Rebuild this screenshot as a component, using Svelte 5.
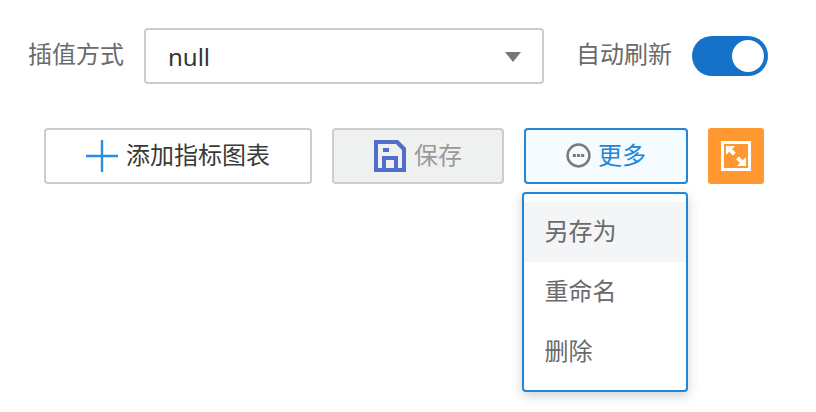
<script>
	const menuItems = ['另存为', '重命名', '删除'];
	let autoRefresh = $state(true);
</script>

<div class="page">
	<div class="filters">
		<span class="label">插值方式</span>
		<div class="select">
			<span>null</span>
			<i class="caret"></i>
		</div>
		<span class="label refresh">自动刷新</span>
		<button class="toggle" class:on={autoRefresh} aria-label="自动刷新" onclick={() => (autoRefresh = !autoRefresh)}>
			<i></i>
		</button>
	</div>

	<div class="actions">
		<button class="btn add">
			<svg width="32" height="32" viewBox="0 0 32 32">
				<path d="M0 16H32M16 0V32" stroke="#2b8ce0" stroke-width="2.4" fill="none" />
			</svg>
			<span>添加指标图表</span>
		</button>
		<button class="btn save" disabled>
			<svg width="32" height="32" viewBox="0 0 32 32">
				<path
					fill="#4f6fcb"
					fill-rule="evenodd"
					d="M0 0H24L32 8V32H0ZM4 4V28H8V16H24V28H28V10L22 4ZM12 20V28H20V20ZM9 8H15V12H9Z"
				/>
			</svg>
			<span>保存</span>
		</button>
		<div class="more-wrap">
			<button class="btn more">
				<svg class="dots" width="25" height="25" viewBox="0 0 24 24">
					<circle cx="12" cy="12" r="10.5" fill="none" stroke="#7a7a7a" stroke-width="2.4" />
					<path d="M6.5 10.500h3v3h-3zM10.500 10.500h3v3h-3zM14.500 10.500h3v3h-3z" fill="#7a7a7a" />
				</svg>
				<span>更多</span>
			</button>
			<ul class="menu">
				{#each menuItems as item, i}
					<li class:active={i === 0}>{item}</li>
				{/each}
			</ul>
		</div>
		<button class="expand" aria-label="全屏">
			<svg width="32" height="32" viewBox="0 0 32 32">
				<rect x="2.500" y="2.500" width="27" height="27" fill="none" stroke="#fff" stroke-width="3" />
				<path d="M6 6h9l-3 3 3.800 3.800-2.800 2.800L9.200 11.800 6 15zM26 26h-9l3-3-3.800-3.800 2.800-2.800 3.800 3.800L26 17z" fill="#fff" />
			</svg>
		</button>
	</div>
</div>

<style>
	:global(body) {
		background: #fff;
	}

	.page {
		width: 816px;
		height: 412px;
		box-sizing: border-box;
		padding: 28px 28px 0;
		font-family: 'Noto Sans', 'Noto Sans CJK SC', sans-serif;
		overflow: hidden;
	}

	.filters {
		display: flex;
		align-items: center;
		height: 56px;
	}

	.label {
		font-size: 24px;
		color: #6a6a6a;
		margin-bottom: 8px;
	}

	.select {
		width: 400px;
		height: 56px;
		box-sizing: border-box;
		margin-left: 20px;
		padding: 0 22px;
		border: 2px solid #ccc;
		border-radius: 4px;
		display: flex;
		align-items: center;
		justify-content: space-between;
		font-size: 24px;
		color: #333;
	}

	.caret {
		width: 0;
		height: 0;
		border-left: 8px solid transparent;
		border-right: 8px solid transparent;
		border-top: 10px solid #777;
		margin-top: 2px;
		margin-right: -1px;
	}

	.refresh {
		margin-left: 32px;
	}

	.toggle {
		width: 76px;
		height: 40px;
		margin-left: 20px;
		padding: 4px;
		border: none;
		border-radius: 20px;
		background: #ccc;
		display: flex;
		cursor: pointer;
	}

	.toggle.on {
		background: #1572c8;
		justify-content: flex-end;
	}

	.toggle i {
		width: 32px;
		height: 32px;
		border-radius: 50%;
		background: #fff;
	}

	.actions {
		display: flex;
		align-items: flex-start;
		gap: 20px;
		margin-top: 44px;
		padding-left: 16px;
	}

	.btn {
		height: 56px;
		box-sizing: border-box;
		border: 2px solid #ccc;
		border-radius: 4px;
		background: #fff;
		font-family: inherit;
		font-size: 24px;
		color: #3a3a3a;
		display: flex;
		align-items: center;
		justify-content: center;
		cursor: pointer;
		padding: 0;
	}

	.btn span {
		margin-bottom: 6px;
	}

	.add {
		width: 268px;
		gap: 8px;
	}

	.save {
		width: 172px;
		gap: 8px;
		background: #eff1f1;
		color: #999;
		cursor: default;
	}

	.more-wrap {
		position: relative;
	}

	.more {
		width: 164px;
		gap: 7px;
		border-color: #2185d8;
		background: #f6fbff;
		color: #2185d8;
	}

	.dots {
		margin-bottom: 2px;
	}

	.menu {
		position: absolute;
		top: 64px;
		left: -2px;
		width: 166px;
		height: 200px;
		box-sizing: border-box;
		margin: 0;
		padding: 8px 0;
		list-style: none;
		background: #fff;
		border: 2px solid #2185d8;
		border-radius: 4px;
		box-shadow: 0 4px 12px rgba(0, 0, 0, 0.18);
		font-size: 24px;
		color: #6a6a6a;
	}

	.menu li {
		height: 60px;
		line-height: 58px;
		padding-left: 20.5px;
	}

	.menu li.active {
		background: #f4f5f7;
	}

	.expand {
		width: 56px;
		height: 56px;
		padding: 0;
		border: none;
		border-radius: 3px;
		background: #ff9830;
		display: flex;
		align-items: center;
		justify-content: center;
		cursor: pointer;
	}
</style>
